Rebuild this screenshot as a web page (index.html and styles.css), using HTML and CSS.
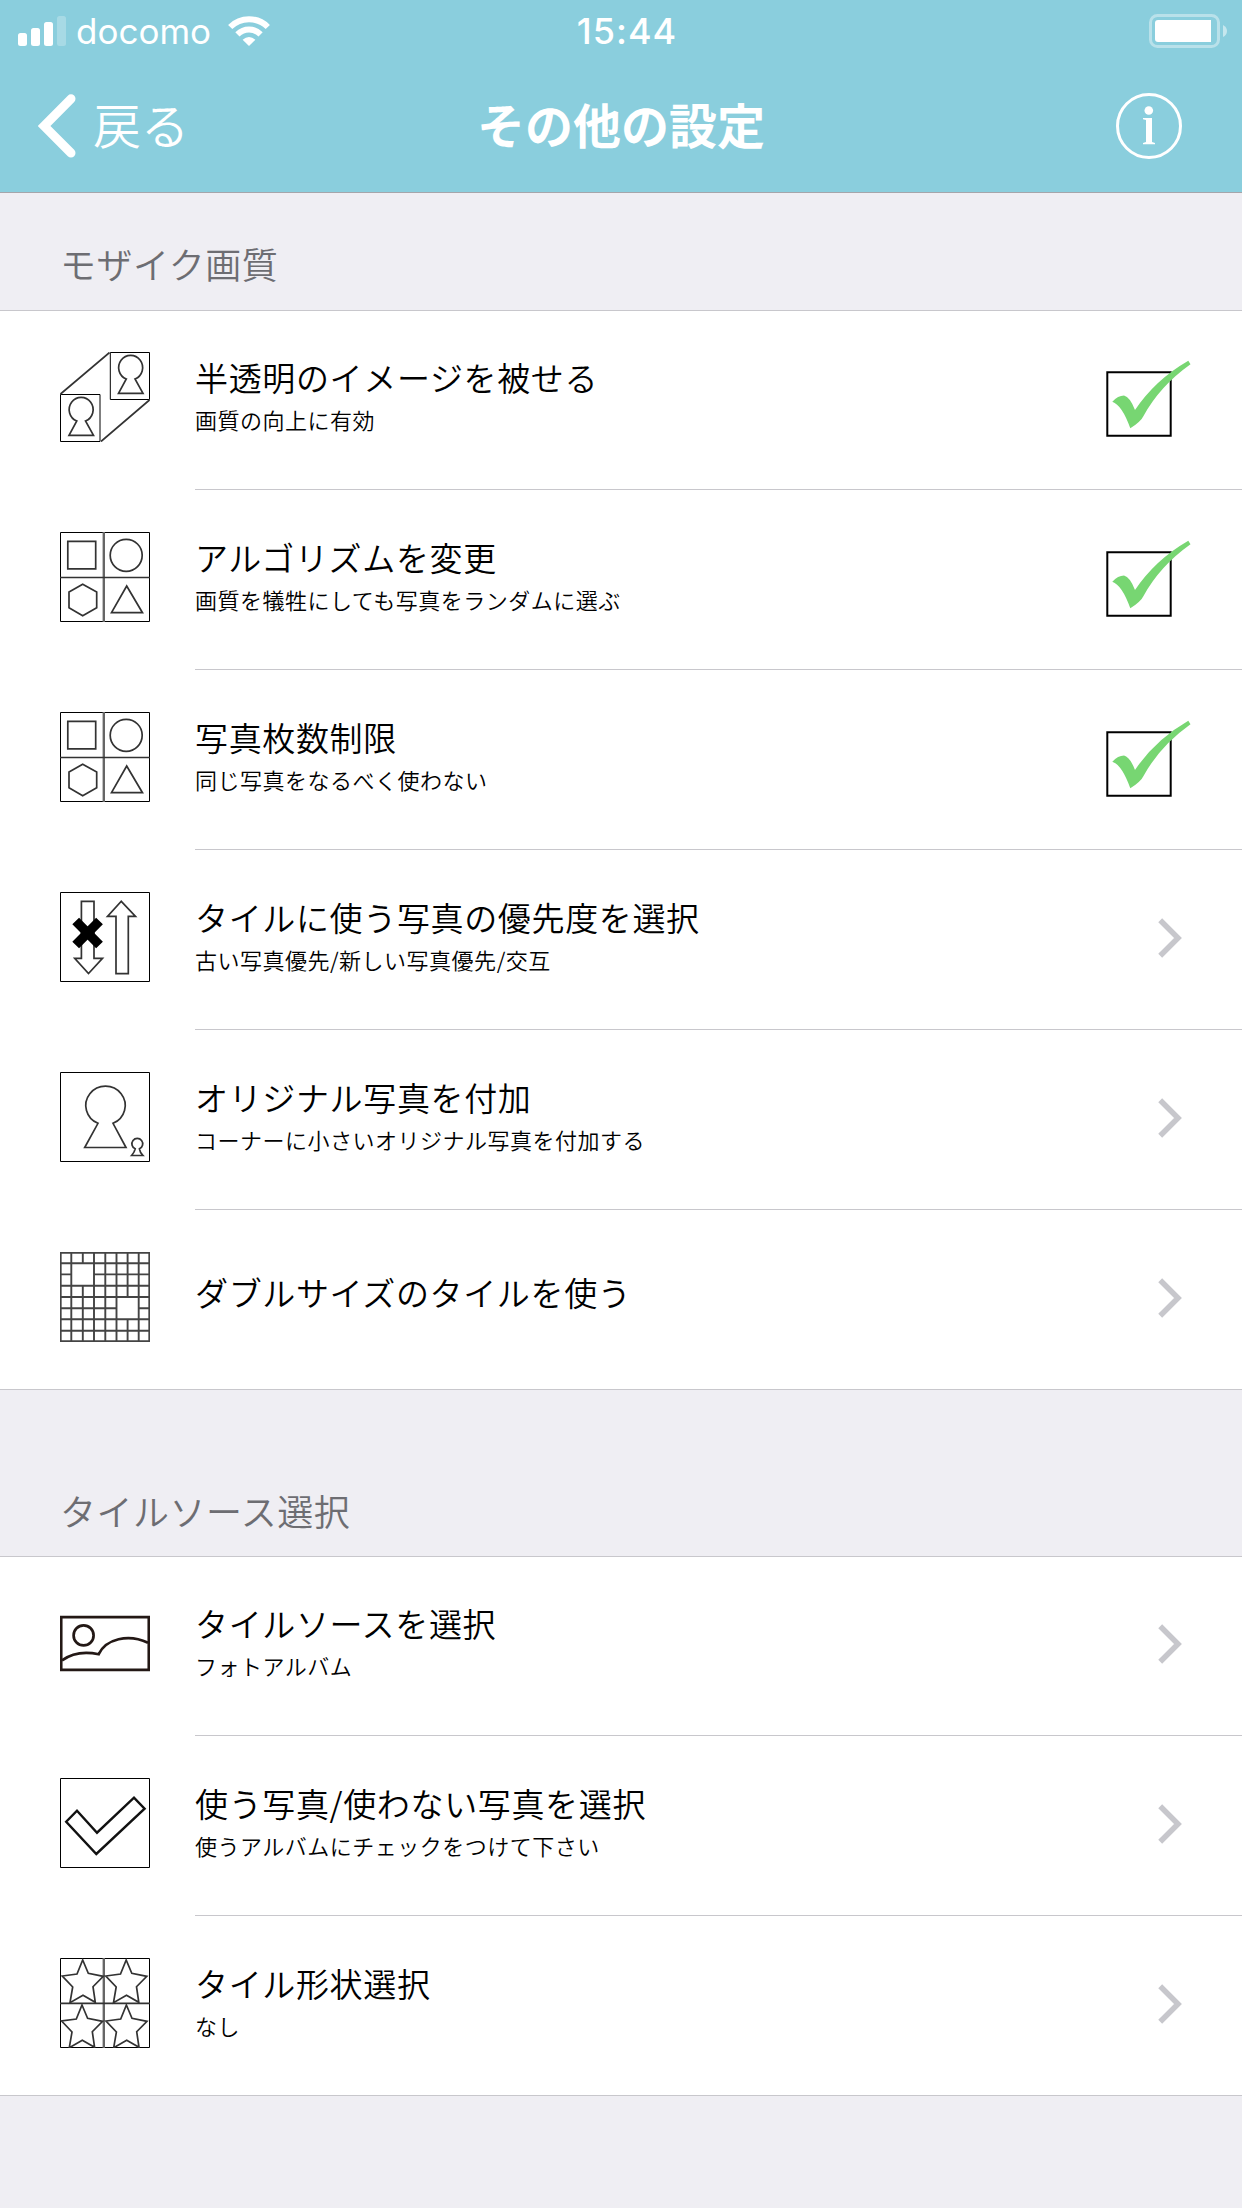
FILE: index.html
```html
<!DOCTYPE html>
<html lang="ja">
<head>
<meta charset="utf-8">
<title>その他の設定</title>
<link rel="stylesheet" href="styles.css">
</head>
<body>
<svg class="defs" width="0" height="0">
  <defs>
    <symbol id="shapes" viewBox="0 0 90 90">
      <path class="frame" d="M.5.5h89v89H.5z"/>
      <path d="M43.800 0V90" stroke="#666" stroke-width="2.400"/>
      <path d="M0 45.500H90M7.800 9.300h27.900v27.500H7.800zM22.700 52.300l14 7.700v15.700l-14 8-13.700-8V60zM66.700 54l15.800 26.700h-31z"/>
      <circle cx="66.200" cy="23.300" r="16"/>
    </symbol>
    <symbol id="tick" viewBox="0 0 85 77">
      <path d="M1.300 12.300h63.400v63.400H1.300z" fill="none" stroke="#000" stroke-width="2"/>
      <path d="M6.300 41.700Q12 35.500 18 35.500Q24 37 29 50Q49 20 82.300.7L84.500 4.300Q54 26 37.500 56Q35 61.500 24.300 68.300Q16 45 6.300 41.700z" fill="#77d672"/>
    </symbol>
    <symbol id="chevron" viewBox="0 0 26 42">
      <path d="M3.200 3.200L21 21 3.200 38.800" fill="none" stroke="#c7c7cc" stroke-width="5.500"/>
    </symbol>
    <symbol id="star" viewBox="0 0 45 46" overflow="visible">
      <path d="M22.700 2l5.600 13.300 15 3-10.300 10.400 2.300 15.600L23 37.300 10 44.700 12.700 29 2.300 18 17 16z"/>
    </symbol>
  </defs>
</svg>

<header class="navbar">
  <div class="status">
    <div class="carrier">
      <svg class="signal" width="48" height="30" viewBox="0 0 48 30" fill="#fff">
        <rect x="0" y="17" width="9" height="13" rx="2.500"/>
        <rect x="13" y="12" width="9" height="18" rx="2.500"/>
        <rect x="26" y="6" width="9" height="24" rx="2.500"/>
        <rect x="39" y="0" width="9" height="30" rx="2.500" opacity=".25"/>
      </svg>
      <span class="carrier-name">docomo</span>
      <svg class="wifi" width="42" height="30" viewBox="0 0 42 30" fill="none" stroke="#fff" stroke-width="6">
        <path d="M2.200 11Q10 3.200 21 3.200T39.800 11"/>
        <path d="M9.400 18.400Q14.500 13.400 21 13.400T32.600 18.400"/>
        <path d="M14.600 23.700Q21 18.300 27.400 23.700L21 30z" fill="#fff" stroke="none"/>
      </svg>
    </div>
    <span class="clock">15:44</span>
    <svg class="battery" width="78" height="34" viewBox="0 0 78 34">
      <rect x="1.500" y="1.500" width="68" height="31" rx="7" fill="none" stroke="#fff" stroke-opacity=".4" stroke-width="3"/>
      <path d="M9 6H62V28H9Q6 28 6 25V9Q6 6 9 6z" fill="#fff"/>
      <path d="M74 11Q78 13 78 17T74 23z" fill="#fff" fill-opacity=".5"/>
    </svg>
  </div>
  <div class="titlebar">
    <a class="back">
      <svg width="38" height="64" viewBox="0 0 38 64"><path d="M33 4.800L6 32 33 59" fill="none" stroke="#fff" stroke-width="9" stroke-linecap="round" stroke-linejoin="miter"/></svg>
      <span>戻る</span>
    </a>
    <h1>その他の設定</h1>
    <svg class="info" width="66" height="66" viewBox="0 0 66 66">
      <circle cx="33" cy="33" r="31.500" fill="none" stroke="#fff" stroke-width="3"/>
      <circle cx="32.800" cy="17.500" r="4.300" fill="#fff"/>
      <path d="M27 25H36V49L39 50V51.300H27V50L30 49V27L27 26.300z" fill="#fff"/>
    </svg>
  </div>
</header>

<main>
  <h2 class="section-title">モザイク画質</h2>
  <ul class="list">
    <li class="row">
      <svg class="icon" viewBox="0 0 90 90">
        <path class="frame" d="M50.300.5H89.500V47.500H50.300zM.5 42.500H40V89.500H.5z"/>
        <path d="M.5 42L49.500.5M41 89.500L89.500 48"/>
        <path id="key" d="M66.300 27A12 12.200 0 1 1 75 27L83 41.300H58.500z"/>
        <use href="#key" x="-49.500" y="42"/>
      </svg>
      <div class="cell"><div class="text"><p class="name">半透明のイメージを被せる</p><p class="note">画質の向上に有効</p></div><svg class="check"><use href="#tick"/></svg></div>
    </li>
    <li class="row">
      <svg class="icon"><use href="#shapes"/></svg>
      <div class="cell"><div class="text"><p class="name">アルゴリズムを変更</p><p class="note">画質を犠牲にしても写真をランダムに選ぶ</p></div><svg class="check"><use href="#tick"/></svg></div>
    </li>
    <li class="row">
      <svg class="icon"><use href="#shapes"/></svg>
      <div class="cell"><div class="text"><p class="name">写真枚数制限</p><p class="note">同じ写真をなるべく使わない</p></div><svg class="check"><use href="#tick"/></svg></div>
    </li>
    <li class="row">
      <svg class="icon" viewBox="0 0 90 90">
        <path class="frame" d="M.5.5h89v89H.5z"/>
        <path d="M21.400 9.400H34V66.300H42.500L28.500 81.500 14.700 66.300H21.400zM61.300 9.300L75.500 24.400H68.300V81.700H56V24.400H47.500z"/>
        <path d="M15.700 29L39.500 53M39.500 29L15.700 53" stroke="#000" stroke-width="9.500"/>
      </svg>
      <div class="cell"><div class="text"><p class="name">タイルに使う写真の優先度を選択</p><p class="note">古い写真優先/新しい写真優先/交互</p></div><svg class="arrow"><use href="#chevron"/></svg></div>
    </li>
    <li class="row">
      <svg class="icon" viewBox="0 0 90 90">
        <path class="frame" d="M.5.5h89v89H.5z"/>
        <path d="M38 51.300A19.700 19.300 0 1 1 53 51.300L66 75.500H24.700z"/>
        <path d="M75.200 76.800A5.400 5.400 0 1 1 79.400 76.800Q79.800 80 83 83.500H71.600Q74.600 80 75.200 76.800z"/>
      </svg>
      <div class="cell"><div class="text"><p class="name">オリジナル写真を付加</p><p class="note">コーナーに小さいオリジナル写真を付加する</p></div><svg class="arrow"><use href="#chevron"/></svg></div>
    </li>
    <li class="row">
      <svg class="icon mesh" viewBox="0 0 90 90">
        <path d="M.7 0V90M11.300 0V90M22.800 0V11.300M22.800 33.700V90M34 0V90M45.300 0V90M56.500 0V90M67.600 0V45M67.600 67.300V90M78.700 0V90M89.300 0V90M0 .7H90M0 11.300H90M0 22.400H11.300M34 22.400H90M0 33.700H90M0 45H90M0 56.300H56.500M78.700 56.300H90M0 67.300H90M0 78.700H90M0 89.300H90"/>
      </svg>
      <div class="cell"><div class="text"><p class="name single">ダブルサイズのタイルを使う</p></div><svg class="arrow"><use href="#chevron"/></svg></div>
    </li>
  </ul>

  <h2 class="section-title second">タイルソース選択</h2>
  <ul class="list">
    <li class="row">
      <svg class="icon photo" viewBox="0 0 90 90">
        <path d="M1.200 19.200H88.800V71.900H1.200z"/>
        <circle cx="23.600" cy="37.400" r="10"/>
        <path d="M2 62.300Q17 51.500 38.700 56.200C46 41 68 35.500 88 44.700"/>
      </svg>
      <div class="cell"><div class="text"><p class="name">タイルソースを選択</p><p class="note">フォトアルバム</p></div><svg class="arrow"><use href="#chevron"/></svg></div>
    </li>
    <li class="row">
      <svg class="icon" viewBox="0 0 90 90">
        <path class="frame" d="M.5.5h89v89H.5z"/>
        <path d="M17 32.700L37 54.700 74 19.600 84.600 30.700 36.300 76 6.200 43.700z" stroke="#111" stroke-width="2.400"/>
      </svg>
      <div class="cell"><div class="text"><p class="name">使う写真/使わない写真を選択</p><p class="note">使うアルバムにチェックをつけて下さい</p></div><svg class="arrow"><use href="#chevron"/></svg></div>
    </li>
    <li class="row">
      <svg class="icon" viewBox="0 0 90 90">
        <path class="frame" d="M.5.5h89v89H.5z"/>
        <path d="M43.800 0V90" stroke="#666" stroke-width="2.400"/>
        <path d="M0 45.300H90"/>
        <use href="#star" width="45" height="46"/>
        <use href="#star" x="43.500" width="45" height="46"/>
        <use href="#star" x="-.7" y="45" width="45" height="46"/>
        <use href="#star" x="43.700" y="45" width="45" height="46"/>
      </svg>
      <div class="cell"><div class="text"><p class="name">タイル形状選択</p><p class="note">なし</p></div><svg class="arrow"><use href="#chevron"/></svg></div>
    </li>
  </ul>
</main>
</body>
</html>
```
FILE: styles.css
```css
* {
  box-sizing: border-box;
  margin: 0;
  padding: 0;
}

body {
  min-height: 2208px;
  background: #efeef3;
  color: #000;
  font-family: "Noto Sans CJK JP", sans-serif;
  font-weight: 350;
}

svg {
  display: block;
  flex: none;
}

.defs {
  position: absolute;
}

.navbar {
  height: 193px;
  background: #8acedd;
  border-bottom: 1px solid #a5a5aa;
  color: #fff;
}

.status {
  display: grid;
  grid-template-columns: 1fr auto 1fr;
  align-items: center;
  height: 60px;
  padding: 0 15px 0 18px;
  font: 36px/60px Inter, sans-serif;
}

.carrier {
  display: flex;
  align-items: center;
}

.carrier-name {
  margin: 1px 0 0 10px;
  width: 152px;
  font-size: 35px;
}

.clock {
  margin: 1px 0 0 9px;
  font-weight: 500;
  letter-spacing: 1px;
}

.battery {
  justify-self: end;
}

.titlebar {
  display: grid;
  grid-template-columns: 1fr auto 1fr;
  align-items: center;
  height: 132px;
  padding: 0 38px;
}

.back {
  display: flex;
  align-items: center;
  gap: 17px;
  font-size: 48px;
  line-height: 66px;
}

.back span {
  padding-bottom: 6px;
}

h1 {
  padding-bottom: 6px;
  font-size: 48px;
  line-height: 66px;
  font-weight: 700;
}

.info {
  justify-self: end;
  margin-right: 22px;
}

.section-title {
  height: 117px;
  padding: 44px 0 0 60px;
  font-size: 36px;
  line-height: 52px;
  font-weight: 350;
  letter-spacing: .5px;
  color: #6d6d72;
}

.section-title.second {
  height: 166px;
  padding-top: 94px;
}

.list {
  list-style: none;
  background: #fff;
  box-shadow: inset 0 1px #c8c7cc;
}

.row {
  display: flex;
  height: 180px;
  padding-left: 60px;
}

.row:last-child {
  border-bottom: 1px solid #c8c7cc;
}

.icon {
  width: 90px;
  height: 90px;
  margin: 42px 45px 0 0;
  fill: none;
  stroke: #333;
  stroke-width: 1.7;
}

.frame {
  stroke: #000;
  stroke-width: 1;
}

.mesh {
  stroke: #444;
  stroke-width: 1.9;
}

.photo {
  stroke: #231815;
  stroke-width: 2.7;
}

.cell {
  display: flex;
  flex: 1;
  justify-content: space-between;
  border-bottom: 1px solid #c8c7cc;
}

.row:last-child .cell {
  border-bottom: 0;
}

.text {
  padding-top: 43px;
}

.name {
  font-size: 33px;
  line-height: 48px;
  letter-spacing: .65px;
}

.name.single {
  padding-top: 15px;
}

.note {
  padding-top: 1px;
  font-size: 22px;
  line-height: 34px;
  letter-spacing: .5px;
}

.check {
  width: 85px;
  height: 77px;
  margin: 50px 51px 0 0;
}

.arrow {
  width: 26px;
  height: 42px;
  margin: 67px 59px 0 0;
}
```
